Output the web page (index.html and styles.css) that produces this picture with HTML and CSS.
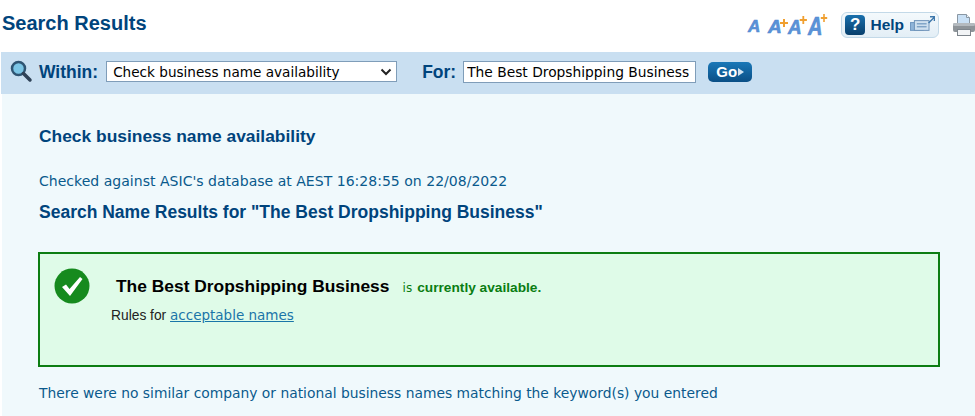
FILE: index.html
```html
<!DOCTYPE html>
<html lang="en">
<head>
  <meta charset="UTF-8" />
  <title>Search Results</title>
  <link rel="stylesheet" href="styles.css">
</head>
<body>
  <header class="top">
    <h1>Search Results</h1>
    <div class="tools">
      <div class="sizes">
        <span class="size s1">A</span>
        <span class="size s2">A<i class="plus"></i></span>
        <span class="size s3">A<i class="plus"></i></span>
        <span class="size s4">A<i class="plus"></i></span>
      </div>
      <a class="help">
        <span class="help-q">?</span>
        <span class="help-text">Help</span>
        <svg width="26" height="20" viewBox="0 0 26 20">
          <rect x="0.500" y="7.500" width="13" height="8" fill="#8fb4d8" stroke="#6f97c0"/>
          <rect x="4.500" y="5.500" width="15" height="10" fill="#cfe0ef" stroke="#6d92b8"/>
          <rect x="7" y="8" width="10" height="1.500" fill="#7fa3c6"/>
          <rect x="7" y="11" width="10" height="1.500" fill="#7fa3c6"/>
          <path d="M19 8 L25 2 M20.500 1.500 H25 V6" fill="none" stroke="#3f78ab" stroke-width="1.500"/>
        </svg>
      </a>
      <svg class="printer" width="22" height="24" viewBox="0 0 22 24">
        <path d="M4.500 1.500 H13.500 L16.500 4.500 V12 H4.500 Z" fill="#c9e0f5" stroke="#8a97a3"/>
        <path d="M13.500 1.500 V4.500 H16.500" fill="#eef6fc" stroke="#8a97a3"/>
        <rect x="0" y="10" width="22" height="9" rx="2" fill="#8e9499"/>
        <rect x="0" y="10" width="22" height="3" rx="1.500" fill="#b4babf"/>
        <rect x="4.500" y="16.500" width="13" height="6" fill="#f2f4f6" stroke="#7d858c"/>
      </svg>
    </div>
  </header>

  <form class="search-bar">
    <svg class="glass" width="24" height="24" viewBox="0 0 24 24">
      <circle cx="9.500" cy="9.500" r="6.500" fill="#7cc6e6" stroke="#2f5573" stroke-width="2.500"/>
      <path d="M14.500 14.500 L21 21" stroke="#2f4358" stroke-width="3.500" stroke-linecap="round"/>
    </svg>
    <label class="within-label">Within:</label>
    <select class="within">
      <option>Check business name availability</option>
    </select>
    <label class="for-label">For:</label>
    <input class="for" type="text" value="The Best Dropshipping Business">
    <button class="go" type="button">Go<span class="go-arrow"></span></button>
  </form>

  <main class="panel">
    <h2>Check business name availability</h2>
    <p class="checked">Checked against ASIC's database at AEST 16:28:55 on 22/08/2022</p>
    <h3>Search Name Results for "The Best Dropshipping Business"</h3>

    <div class="result">
      <svg class="tick" width="36" height="36" viewBox="0 0 36 36">
        <circle cx="18" cy="18" r="17.500" fill="#168a1e"/>
        <path d="M8 19 L12 16.500 L15.500 21 L26 9 L28.500 11 L16 28 Z" fill="#fff"/>
      </svg>
      <div class="result-body">
        <p class="result-line">
          <strong class="name">The Best Dropshipping Business</strong>
          <span class="is">is</span>
          <span class="avail">currently available.</span>
        </p>
        <p class="rules">Rules for <a href="#">acceptable names</a></p>
      </div>
    </div>

    <p class="similar">There were no similar company or national business names matching the keyword(s) you entered</p>
  </main>
</body>
</html>
```

FILE: styles.css
```css
html, body {
  height: 416px;
  overflow: hidden;
}

body {
  margin: 0;
  background: #fff;
  font-family: "DejaVu Sans", sans-serif;
  color: #00447c;
}

.top {
  display: flex;
  justify-content: space-between;
  align-items: center;
  height: 52px;
  padding: 0 0 6px 2px;
  box-sizing: border-box;
}

h1 {
  margin: 0;
  font-family: "Liberation Sans", sans-serif;
  font-size: 20px;
  color: #00447c;
}

.tools {
  display: flex;
  align-items: center;
  margin-top: 4px;
}

.sizes {
  display: flex;
  align-items: flex-end;
  height: 24px;
  margin-right: 13px;
}

.size {
  position: relative;
  top: -2px;
  width: 20px;
  font-family: "Liberation Sans", sans-serif;
  font-weight: bold;
  font-style: italic;
  color: #5b93d8;
  line-height: 17px;
  transform-origin: left center;
  -webkit-text-stroke: 0.6px #4f88d0;
}

.s1 { font-size: 17px; }
.s2 { font-size: 19px; }
.s3 { font-size: 21px; transform: scaleX(0.9); }
.s4 { font-size: 25px; transform: scaleX(0.8); }

/* orange plus beside the bigger A's */
.plus {
  position: absolute;
  width: 8px;
  height: 2px;
  background: #f0a030;
}

.plus::after {
  content: "";
  position: absolute;
  left: 3px;
  top: -3px;
  width: 2px;
  height: 8px;
  background: #f0a030;
}

.s2 .plus { left: 12px; top: 4px; }
.s3 .plus { left: 13px; top: 1px; }
.s4 .plus { left: 16px; top: -1px; }

.help {
  display: flex;
  align-items: center;
  gap: 5px;
  width: 98px;
  height: 26px;
  box-sizing: border-box;
  padding: 0 3px;
  background: linear-gradient(#f4f9fc, #e3eef6);
  border: 1px solid #c3d9e8;
  border-radius: 6px;
}

.help-q {
  width: 21px;
  height: 20px;
  background: linear-gradient(#1a70ad, #083f6c);
  border-radius: 4px;
  color: #fff;
  font: bold 17px/20px "Liberation Sans", sans-serif;
  text-align: center;
}

.help-text {
  width: 35px;
  font: bold 15.500px "Liberation Sans", sans-serif;
  color: #00447c;
}

.printer {
  margin-left: 14px;
}

.search-bar {
  display: flex;
  align-items: center;
  height: 42px;
  padding: 0 0 0 8px;
  box-sizing: border-box;
  background: #c9dff1;
  margin: 0;
  margin-left: 1px;
}

.glass {
  margin-right: 6px;
  margin-top: -4px;
}

.within-label,
.for-label {
  font-family: "Liberation Sans", sans-serif;
  font-weight: bold;
  font-size: 17.500px;
  color: #00447c;
  margin-top: -2px;
}

.within {
  width: 291px;
  height: 21px;
  margin-left: 8px;
  padding: 0 0 0 6px;
  appearance: none;
  background: #fff url("data:image/svg+xml,%3Csvg xmlns='http://www.w3.org/2000/svg' width='12' height='8'%3E%3Cpath d='M1.500 1.500 L6 6 L10.500 1.500' fill='none' stroke='%23222' stroke-width='2'/%3E%3C/svg%3E") no-repeat 273px 6px;
  border: 1px solid #7f9db9;
  border-radius: 0;
  font-family: "DejaVu Sans", sans-serif;
  font-size: 13.600px;
  color: #000;
  margin-top: -3px;
}

.for-label {
  margin-left: 25px;
}

.for {
  width: 233px;
  height: 22px;
  margin-left: 7px;
  padding: 0 3px;
  box-sizing: border-box;
  border: 1px solid #7f9db9;
  font-family: "DejaVu Sans", sans-serif;
  font-size: 13.800px;
  color: #000;
  margin-top: -2px;
}

.go {
  display: flex;
  align-items: center;
  justify-content: center;
  gap: 1px;
  width: 44px;
  height: 20px;
  margin-left: 12px;
  margin-top: -3px;
  padding: 0;
  border: none;
  border-radius: 5px;
  background: linear-gradient(#1a78b8, #0a4f86);
  color: #fff;
  font: bold 15px "Liberation Sans", sans-serif;
}

.go-arrow {
  border-left: 6px solid #cfe3f2;
  border-top: 4px solid transparent;
  border-bottom: 4px solid transparent;
}

.panel {
  margin-left: 2px;
  padding: 32px 35px 0 37px;
  background: #f0f9fc;
  height: 322px;
  box-sizing: border-box;
}

h2 {
  margin: 0;
  font-family: "Liberation Sans", sans-serif;
  font-size: 17.400px;
  line-height: 20px;
  color: #00447c;
}

.checked {
  margin: 27px 0 0;
  font-size: 14.050px;
  line-height: 16px;
  color: #0a5a8c;
}

h3 {
  margin: 13px 0 0;
  font-family: "Liberation Sans", sans-serif;
  font-size: 17.500px;
  line-height: 20px;
  color: #00447c;
}

.result {
  display: flex;
  height: 115px;
  margin: 30px 0 0 -1px;
  padding: 14px 0 0 14px;
  box-sizing: border-box;
  background: #dffbe8;
  border: 2px solid #0c7d12;
}

.result-body {
  margin-left: 21px;
}

.result-line {
  margin: 6px 0 0;
  line-height: 24px;
}

.name {
  margin-left: 5px;
  font-family: "Liberation Sans", sans-serif;
  font-size: 17.400px;
  color: #000;
}

.is {
  margin-left: 8px;
  font-size: 12px;
  color: #0a7d12;
}

.avail {
  font-family: "Liberation Sans", sans-serif;
  font-weight: bold;
  font-size: 13.700px;
  color: #0a7d12;
}

.rules {
  margin: 7px 0 0;
  font-family: "Liberation Sans", sans-serif;
  font-size: 13.800px;
  line-height: 17px;
  color: #222;
}

.rules a {
  font-family: "DejaVu Sans", sans-serif;
  font-size: 13.500px;
  color: #1a75a8;
}

.similar {
  margin: 17px 0 0;
  font-size: 13.850px;
  line-height: 18px;
  color: #0a5a8c;
}
```
